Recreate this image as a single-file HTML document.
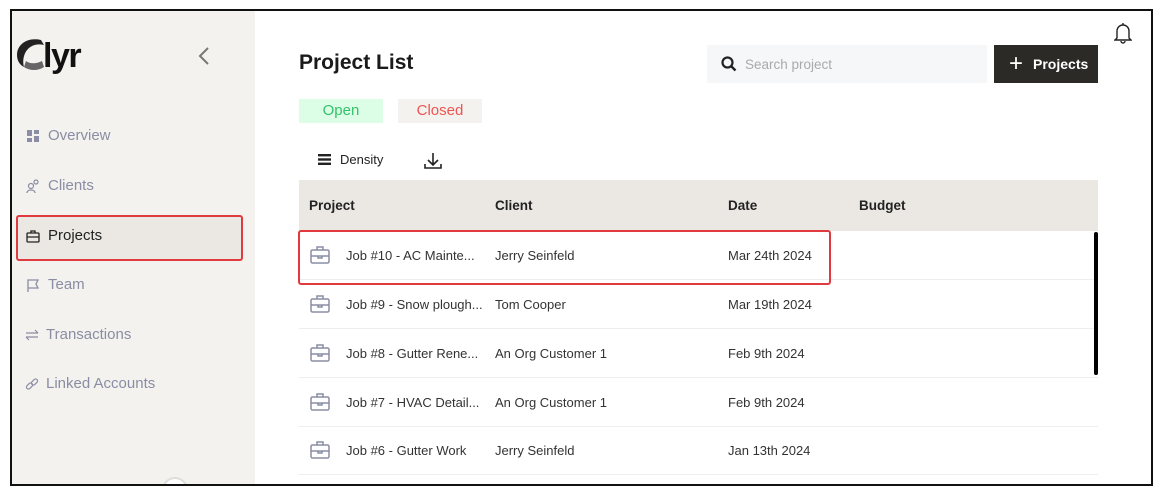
<!DOCTYPE html>
<html><head><meta charset="utf-8"><style>
*{box-sizing:border-box;margin:0;padding:0}
body{width:1161px;height:501px;background:#fff;font-family:"Liberation Sans",sans-serif;position:relative;overflow:hidden}
.frame{position:absolute;left:10px;top:9px;width:1143px;height:477px;border:2px solid #111;overflow:hidden;background:#fff}
.side{position:absolute;left:0;top:0;width:243px;height:475px;background:#f3f2ef}
.nav{position:absolute;left:14px;font-size:15px;color:#8a8da3;display:flex;align-items:center;gap:8px}
.nav svg{width:14px;height:14px}
.abs{position:absolute}
.row{position:absolute;left:287px;width:799px;height:49px;border-bottom:1px solid #eeeeee;font-size:13px;color:#333}
.row span{position:absolute;top:17px}
</style></head><body>
<div class="frame">
 <div class="side">
  <svg class="abs" style="left:3px;top:24px" width="84" height="40" viewBox="0 0 84 40">
   <path d="M26 5 C13 2 2 9 2 20 C2 26 5 30 9 32 C7 25 9 15 17 11 C21 9 25 9 29 10 Z" fill="#222"/>
   <path d="M9 32 C15 36 23 36 29 32 L27 26 C21 29 15 29 11 26 Z" fill="#666"/>
   <text x="28" y="32" font-family="Liberation Sans" font-weight="bold" font-size="34" fill="#111" letter-spacing="-1.5">lyr</text>
  </svg>
  <svg class="abs" style="left:185px;top:35px" width="14" height="20" viewBox="0 0 14 20"><path d="M11 2 L3 10 L11 18" stroke="#777" stroke-width="2" fill="none"/></svg>
  <div class="nav" style="top:116px"><svg viewBox="0 0 14 14"><rect x="1" y="1" width="5" height="6" fill="#8a8da3"/><rect x="8" y="1" width="5" height="4" fill="#8a8da3"/><rect x="1" y="9" width="5" height="4" fill="#8a8da3"/><rect x="8" y="7" width="5" height="6" fill="#8a8da3"/></svg>Overview</div>
  <div class="nav" style="top:166px"><svg viewBox="0 0 14 14" fill="none" stroke="#8a8da3" stroke-width="1.2"><circle cx="5" cy="7" r="2.5"/><path d="M1 14 C1 10 9 10 9 14"/><circle cx="10" cy="3" r="2"/></svg>Clients</div>
  <div class="abs" style="left:4px;top:204px;width:227px;height:46px;border:2px solid #e0393e;border-radius:3px;background:#ebe8e4"></div>
  <div class="nav" style="top:216px;color:#222"><svg viewBox="0 0 14 14" fill="none" stroke="#222" stroke-width="1.3"><rect x="1" y="4" width="12" height="9" rx="1"/><path d="M5 4V2h4v2M1 8h12"/></svg>Projects</div>
  <div class="nav" style="top:265px"><svg viewBox="0 0 14 14" fill="none" stroke="#8a8da3" stroke-width="1.3"><path d="M2 14V2h10l-2 4 2 4H2"/></svg>Team</div>
  <div class="nav" style="top:315px;left:13px;gap:7px"><svg viewBox="0 0 14 14" fill="none" stroke="#8a8da3" stroke-width="1.2"><path d="M1 5h12M10 2l3 3M13 9H1M4 12L1 9"/></svg>Transactions</div>
  <div class="nav" style="top:364px;left:13px;gap:7px"><svg viewBox="0 0 14 14" fill="none" stroke="#8a8da3" stroke-width="1.2"><rect x="1" y="7" width="7" height="4" rx="2" transform="rotate(-45 4.5 9)"/><rect x="6" y="3" width="7" height="4" rx="2" transform="rotate(-45 9.5 5)"/></svg>Linked Accounts</div>
  <div class="abs" style="left:150px;top:466px;width:26px;height:26px;border-radius:50%;border:2px solid #ddd;background:#fff"></div>
 </div>
 <div class="abs" style="left:287px;top:40px;font-size:21px;font-weight:bold;color:#1a1a1a">Project List</div>
 <div class="abs" style="left:695px;top:34px;width:280px;height:38px;background:#f6f7f8"></div>
 <svg class="abs" style="left:709px;top:45px" width="16" height="16" viewBox="0 0 16 16"><circle cx="6.5" cy="6.5" r="5" stroke="#222" stroke-width="2.2" fill="none"/><path d="M10 10l4.5 4.5" stroke="#222" stroke-width="2.4"/></svg>
 <div class="abs" style="left:733px;top:46px;font-size:13.5px;color:#aaa">Search project</div>
 <div class="abs" style="left:982px;top:34px;width:104px;height:38px;background:#2b2a26;color:#fff;font-size:14px;font-weight:bold;display:flex;align-items:center;padding-left:15px"><span style="font-size:24px;font-weight:normal;margin-right:10px;line-height:1">+</span>Projects</div>
 <svg class="abs" style="left:1102px;top:11px" width="18" height="22" viewBox="0 0 18 22" fill="none" stroke="#222" stroke-width="1.4"><path d="M3 16V9a6 6 0 0 1 12 0v7l2 2H1z"/><path d="M7 19a2 2 0 0 0 4 0"/><path d="M9 1v2"/></svg>
 <div class="abs" style="left:287px;top:88px;width:84px;height:24px;background:#dcfde6;color:#34c26a;font-size:15px;text-align:center;line-height:24px">Open</div>
 <div class="abs" style="left:386px;top:88px;width:84px;height:24px;background:#f3f2ef;color:#ef5350;font-size:15px;text-align:center;line-height:24px">Closed</div>
 <svg class="abs" style="left:306px;top:143px" width="13" height="11" viewBox="0 0 13 11"><rect y="0" width="13" height="2.4" fill="#222"/><rect y="4.3" width="13" height="2.4" fill="#222"/><rect y="8.6" width="13" height="2.4" fill="#222"/></svg>
 <div class="abs" style="left:328px;top:141px;font-size:13px;color:#222">Density</div>
 <svg class="abs" style="left:412px;top:141px" width="18" height="18" viewBox="0 0 18 18" fill="none" stroke="#222" stroke-width="1.6"><path d="M9 1v11M4 8l5 5 5-5M1 12v4h16v-4"/></svg>
 <div class="abs" style="left:287px;top:169px;width:799px;height:51px;background:#ebe8e4;font-size:13.5px;font-weight:bold;color:#222">
  <span class="abs" style="left:10px;top:18px">Project</span><span class="abs" style="left:196px;top:18px">Client</span><span class="abs" style="left:429px;top:18px">Date</span><span class="abs" style="left:560px;top:18px">Budget</span>
 </div>
 <div class="row" style="top:220px"><svg class="abs" style="left:11px;top:15px" width="20" height="18" viewBox="0 0 20 18" fill="none" stroke="#8a8da3" stroke-width="1.5"><rect x="1" y="4" width="18" height="13" rx="1.5"/><path d="M7 4V1h6v3M1 10h18M8 10v2h4v-2"/></svg><span style="left:47px">Job #10 - AC Mainte...</span><span style="left:196px">Jerry Seinfeld</span><span style="left:429px">Mar 24th 2024</span></div>
 <div class="row" style="top:269px"><svg class="abs" style="left:11px;top:15px" width="20" height="18" viewBox="0 0 20 18" fill="none" stroke="#8a8da3" stroke-width="1.5"><rect x="1" y="4" width="18" height="13" rx="1.5"/><path d="M7 4V1h6v3M1 10h18M8 10v2h4v-2"/></svg><span style="left:47px">Job #9 - Snow plough...</span><span style="left:196px">Tom Cooper</span><span style="left:429px">Mar 19th 2024</span></div>
 <div class="row" style="top:318px"><svg class="abs" style="left:11px;top:15px" width="20" height="18" viewBox="0 0 20 18" fill="none" stroke="#8a8da3" stroke-width="1.5"><rect x="1" y="4" width="18" height="13" rx="1.5"/><path d="M7 4V1h6v3M1 10h18M8 10v2h4v-2"/></svg><span style="left:47px">Job #8 - Gutter Rene...</span><span style="left:196px">An Org Customer 1</span><span style="left:429px">Feb 9th 2024</span></div>
 <div class="row" style="top:367px"><svg class="abs" style="left:11px;top:15px" width="20" height="18" viewBox="0 0 20 18" fill="none" stroke="#8a8da3" stroke-width="1.5"><rect x="1" y="4" width="18" height="13" rx="1.5"/><path d="M7 4V1h6v3M1 10h18M8 10v2h4v-2"/></svg><span style="left:47px">Job #7 - HVAC Detail...</span><span style="left:196px">An Org Customer 1</span><span style="left:429px">Feb 9th 2024</span></div>
 <div class="row" style="top:415px"><svg class="abs" style="left:11px;top:15px" width="20" height="18" viewBox="0 0 20 18" fill="none" stroke="#8a8da3" stroke-width="1.5"><rect x="1" y="4" width="18" height="13" rx="1.5"/><path d="M7 4V1h6v3M1 10h18M8 10v2h4v-2"/></svg><span style="left:47px">Job #6 - Gutter Work</span><span style="left:196px">Jerry Seinfeld</span><span style="left:429px">Jan 13th 2024</span></div>
 <div class="abs" style="left:286px;top:219px;width:533px;height:55px;border:2px solid #e0393e;border-radius:3px"></div>
 <div class="abs" style="left:1082px;top:221px;width:4px;height:143px;background:#000;border-radius:2px"></div>
</div>
</body></html>
